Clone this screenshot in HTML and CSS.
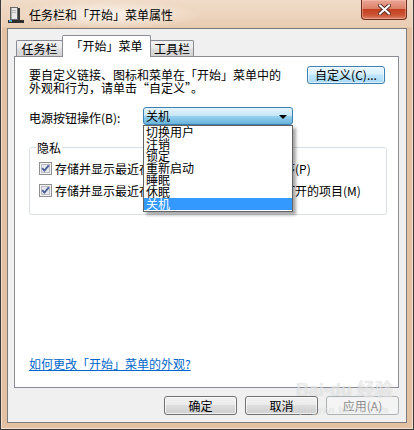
FILE: index.html
```html
<!DOCTYPE html>
<html lang="zh-CN">
<head>
    <meta charset="UTF-8">
    <meta name="viewport" content="width=device-width, initial-scale=1.0">
    <title>任务栏和「开始」菜单属性</title>
    <link rel="stylesheet" href="styles.css">
</head>
<body>
    <div class="window">
        <div class="titlebar">
            <svg class="app-icon" width="16" height="16" viewBox="0 0 16 16">
                <rect x="2.5" y="0.5" width="7" height="12" fill="#e8e8e8" stroke="#6a6a6a"/>
                <rect x="3" y="1" width="1" height="11" fill="#a8a8a8"/>
                <rect x="10" y="1" width="2" height="12" fill="#3a3a3a"/>
                <rect x="4" y="3" width="4" height="1" fill="#b5b5b5"/>
                <rect x="4" y="5" width="4" height="1" fill="#b5b5b5"/>
                <rect x="0" y="13" width="16" height="3" fill="#2f2f2f"/>
                <rect x="1" y="13" width="3" height="2" fill="#4aa0d8"/>
                <rect x="2" y="14" width="1" height="1" fill="#6fc24a"/>
            </svg>
            <span class="title">任务栏和「开始」菜单属性</span>
            <button class="close-btn">
                <svg width="13" height="11" viewBox="0 0 13 11">
                    <path d="M2 1.5 L11 9.5 M11 1.5 L2 9.5" stroke="#5e3026" stroke-width="4" stroke-linecap="square"/>
                    <path d="M2 1.5 L11 9.5 M11 1.5 L2 9.5" stroke="#ffffff" stroke-width="2" stroke-linecap="square"/>
                </svg>
            </button>
        </div>

        <div class="client">
            <div class="tabs">
                <div class="tab tab-taskbar">任务栏</div>
                <div class="tab tab-start active">「开始」菜单</div>
                <div class="tab tab-toolbar">工具栏</div>
            </div>

            <div class="panel">
                <div class="intro">
                    <p>要自定义链接、图标和菜单在「开始」菜单中的<br>外观和行为，请单击“自定义”。</p>
                    <button class="btn btn-hot">自定义(C)...</button>
                </div>

                <div class="power-row">
                    <span class="power-label">电源按钮操作(B):</span>
                    <div class="select">
                        <div class="select-box">
                            <span>关机</span>
                            <span class="arrow"></span>
                        </div>
                        <ul class="select-list">
                            <li>切换用户</li>
                            <li>注销</li>
                            <li>锁定</li>
                            <li>重新启动</li>
                            <li>睡眠</li>
                            <li>休眠</li>
                            <li class="selected">关机</li>
                        </ul>
                    </div>
                </div>

                <fieldset class="privacy">
                    <legend>隐私</legend>
                    <label class="check-row">
                        <svg class="checkbox" width="13" height="13" viewBox="0 0 13 13">
                            <rect x="0.5" y="0.5" width="12" height="12" fill="#f4f4f4" stroke="#8e8f8f"/>
                            <rect x="2.5" y="2.5" width="8" height="8" fill="#e6e8ec" stroke="#b9bcc4"/>
                            <path d="M3.2 6.2 L5.4 8.6 L9.8 3.4" fill="none" stroke="#4a5f97" stroke-width="1.8"/>
                        </svg>
                        存储并显示最近在「开始」菜单中打开的程序(P)
                    </label>
                    <label class="check-row">
                        <svg class="checkbox" width="13" height="13" viewBox="0 0 13 13">
                            <rect x="0.5" y="0.5" width="12" height="12" fill="#f4f4f4" stroke="#8e8f8f"/>
                            <rect x="2.5" y="2.5" width="8" height="8" fill="#e6e8ec" stroke="#b9bcc4"/>
                            <path d="M3.2 6.2 L5.4 8.6 L9.8 3.4" fill="none" stroke="#4a5f97" stroke-width="1.8"/>
                        </svg>
                        存储并显示最近在「开始」菜单和任务栏中打开的项目(M)
                    </label>
                </fieldset>

                <a class="help-link" href="#">如何更改「开始」菜单的外观?</a>
            </div>

            <div class="actions">
                <button class="btn">确定</button>
                <button class="btn">取消</button>
                <button class="btn" disabled>应用(A)</button>
            </div>
        </div>

        <!-- 百度经验水印 -->
        <div class="watermark">
            <span class="wm-logo">Bai<span class="wm-paw">●</span>du 经验</span>
            <span class="wm-url">jingyan.baidu.com</span>
        </div>
    </div>
</body>
</html>
```

FILE: styles.css
```css
* {
    margin: 0;
    padding: 0;
    box-sizing: border-box;
}

body {
    width: 414px;
    height: 430px;
    overflow: hidden;
    background-color: #fff;
    font-family: "Noto Sans CJK SC", sans-serif;
    font-size: 12px;
    line-height: 13px;
    color: #000;
}

.window {
    position: relative;
    width: 414px;
    height: 430px;
    display: flex;
    flex-direction: column;
    padding: 0 6px 6px;
    border: 1px solid #3a3a3a;
    border-top: none;
    background: linear-gradient(to bottom, #f0dcc9 0, #eacdb3 27px, #e4c1a2 28px, #e4c1a2 100%);
    box-shadow: inset 1px 0 0 #f3dfcc, inset -1px 0 0 #f3dfcc, inset 0 -1px 0 #f3dfcc;
}

/* 标题栏 */
.titlebar {
    height: 28px;
    display: flex;
    align-items: flex-start;
    background: radial-gradient(ellipse 95px 14px at 100px 15px, rgba(255, 255, 255, 0.75), rgba(255, 255, 255, 0));
}

.app-icon {
    margin: 7px 0 0 1px;
}

.title {
    margin: 8px 0 0 5px;
    line-height: 14px;
    color: #000;
}

.close-btn {
    margin-left: auto;
    width: 46px;
    height: 20px;
    border: 1px solid #6c2b1f;
    border-top: none;
    border-radius: 0 0 4px 4px;
    background: linear-gradient(to bottom, #e9a796 0%, #dc8068 45%, #c4401f 50%, #cc5436 80%, #e0866a 100%);
    box-shadow: inset 0 0 0 1px rgba(255, 200, 180, 0.45);
    display: flex;
    align-items: center;
    justify-content: center;
}

/* 客户区 */
.client {
    flex: 1;
    display: flex;
    flex-direction: column;
    padding: 6px 7px 0 6px;
    border: 1px solid #7b7b7b;
    background-color: #f0f0f0;
}

.tabs {
    display: flex;
    align-items: flex-end;
    height: 21px;
    padding-left: 2px;
}

.tab {
    height: 16px;
    border: 1px solid #898c95;
    border-bottom: none;
    border-radius: 2px 2px 0 0;
    background: linear-gradient(to bottom, #f3f3f3 0%, #ebebeb 45%, #dddddd 55%, #d3d3d3 100%);
    text-align: center;
    line-height: 15px;
}

.tab-taskbar {
    width: 47px;
}

.tab-start {
    width: 89px;
    margin-left: -1px;
}

.tab-toolbar {
    width: 44px;
    margin-left: -1px;
}

.tab.active {
    position: relative;
    z-index: 1;
    height: 22px;
    margin-bottom: -1px;
    background: #fff;
    line-height: 20px;
}

.panel {
    height: 332px;
    padding: 0 11px 0 14px;
    border: 1px solid #898c95;
    background-color: #fff;
}

.intro {
    display: flex;
    justify-content: space-between;
    align-items: flex-start;
    padding-top: 9px;
}

.intro p {
    margin-top: 2px;
    line-height: 13px;
}

/* 按钮 */
.btn {
    width: 73px;
    height: 19px;
    border: 1px solid #707070;
    border-radius: 3px;
    background: linear-gradient(to bottom, #f2f2f2 0%, #ebebeb 45%, #dddddd 50%, #cfcfcf 100%);
    box-shadow: inset 0 0 0 1px rgba(255, 255, 255, 0.7);
    font-family: inherit;
    font-size: 12px;
    line-height: 16px;
    color: #000;
}

.btn:disabled {
    border-color: #adb2b5;
    background: #f4f4f4;
    box-shadow: none;
    color: #8d8d8d;
}

.btn-hot {
    width: 78px;
    height: 18px;
    margin-right: 2px;
    border-color: #3c7fb1;
    background: linear-gradient(to bottom, #eaf6fd 0%, #d9f0fc 45%, #bee6fd 50%, #a7d9f5 100%);
    box-shadow: inset 0 0 0 1px rgba(255, 255, 255, 0.55);
}

/* 电源按钮下拉框 */
.power-row {
    position: relative;
    z-index: 2;
    display: flex;
    align-items: center;
    height: 18px;
    margin-top: 13px;
}

.power-label {
    width: 114px;
    padding-top: 2px;
}

.select {
    position: relative;
    width: 150px;
    height: 18px;
}

.select-box {
    height: 18px;
    display: flex;
    align-items: center;
    justify-content: space-between;
    padding: 0 5px 0 2px;
    border: 1px solid #3c7fb1;
    border-radius: 3px;
    background: linear-gradient(to bottom, #e5f4fc 0%, #c4e5f6 50%, #98d1ef 51%, #68b3db 100%);
    line-height: 16px;
}

.arrow {
    width: 0;
    height: 0;
    border-left: 4px solid transparent;
    border-right: 4px solid transparent;
    border-top: 4px solid #000;
    margin-top: 1px;
}

.select-list {
    position: absolute;
    left: 0;
    top: 18px;
    width: 150px;
    height: 87px;
    list-style: none;
    border: 1px solid #646464;
    background-color: #fff;
    box-shadow: 3px 3px 3px rgba(0, 0, 0, 0.35);
}

.select-list li {
    height: 12px;
    padding-left: 2px;
    line-height: 12px;
}

.select-list li.selected {
    background-color: #3399ff;
    color: #fff;
}

/* 隐私分组 */
.privacy {
    margin-top: 16px;
    padding: 3px 6px 13px 6px;
    border: 1px solid #d5dfe5;
    border-radius: 3px;
}

.privacy legend {
    padding: 0 1px;
    line-height: 13px;
}

.check-row {
    display: flex;
    align-items: center;
    height: 22px;
    padding-left: 3px;
}

.checkbox {
    flex-shrink: 0;
    margin-right: 3px;
}

.help-link {
    display: block;
    width: max-content;
    margin-top: 143px;
    line-height: 12px;
    color: #0066cc;
    text-decoration: underline;
}

.actions {
    display: flex;
    justify-content: flex-end;
    gap: 8px;
    padding-top: 8px;
}

/* 水印 */
.watermark {
    position: absolute;
    left: 295px;
    top: 379px;
    display: flex;
    flex-direction: column;
    align-items: center;
    white-space: nowrap;
    pointer-events: none;
    color: rgba(255, 255, 255, 0.6);
    text-shadow: 0 0 1px rgba(0, 0, 0, 0.2);
}

.wm-logo {
    font-family: "Liberation Sans", "Noto Sans CJK SC", sans-serif;
    font-size: 18px;
    font-weight: bold;
    line-height: 22px;
}

.wm-paw {
    font-size: 10px;
    vertical-align: top;
}

.wm-url {
    margin-top: 4px;
    font-family: "Liberation Sans", sans-serif;
    font-size: 9px;
    line-height: 10px;
    letter-spacing: 1px;
}
```
